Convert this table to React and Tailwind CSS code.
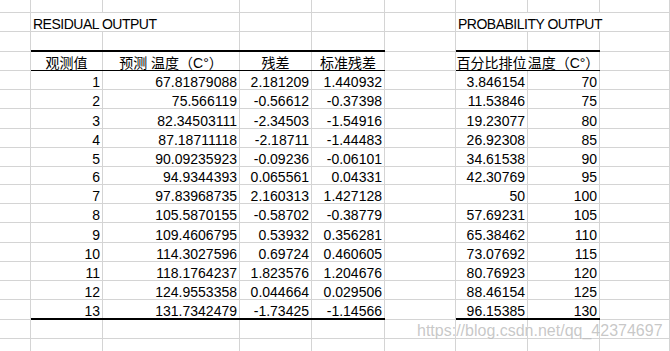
import React from 'react';

// column widths incl. the right grid line
const COLS = ['w-[31px]', 'w-[72px]', 'w-[137px]', 'w-[72px]', 'w-[73px]', 'w-[71px]', 'w-[72px]', 'w-[72px]', 'flex-1'];

const ROW_H = { 13: 'h-[13px]', 18: 'h-[18px]', 19: 'h-[19px]', 20: 'h-[20px]' };

const residuals = [
    ['1', '67.81879088', '2.181209', '1.440932'],
    ['2', '75.566119', '-0.56612', '-0.37398'],
    ['3', '82.34503111', '-2.34503', '-1.54916'],
    ['4', '87.18711118', '-2.18711', '-1.44483'],
    ['5', '90.09235923', '-0.09236', '-0.06101'],
    ['6', '94.9344393', '0.065561', '0.04331'],
    ['7', '97.83968735', '2.160313', '1.427128'],
    ['8', '105.5870155', '-0.58702', '-0.38779'],
    ['9', '109.4606795', '0.53932', '0.356281'],
    ['10', '114.3027596', '0.69724', '0.460605'],
    ['11', '118.1764237', '1.823576', '1.204676'],
    ['12', '124.9553358', '0.044664', '0.029506'],
    ['13', '131.7342479', '-1.73425', '-1.14566'],
];

const probability = [
    ['3.846154', '70'],
    ['11.53846', '75'],
    ['19.23077', '80'],
    ['26.92308', '85'],
    ['34.61538', '90'],
    ['42.30769', '95'],
    ['50', '100'],
    ['57.69231', '105'],
    ['65.38462', '110'],
    ['73.07692', '115'],
    ['80.76923', '120'],
    ['88.46154', '125'],
    ['96.15385', '130'],
];

const dataHeights = [19, 19, 20, 19, 19, 18, 19, 19, 20, 19, 19, 19, 20];

function Cell({ w, align = 'right', bottom = true, line = true, className = '', children }) {
    const justify =
        align === 'right' ? 'justify-end pr-[2px]' : align === 'center' ? 'justify-center' : 'justify-start pl-[2px]';
    return (
        <div
            className={`flex shrink-0 items-end whitespace-nowrap border-[#d4d4d4] leading-none ${line ? 'border-r' : ''} ${bottom ? 'border-b' : ''} ${justify} ${w} ${className}`}
        >
            {children}
        </div>
    );
}

function BlankRow({ h }) {
    return (
        <div className={`flex ${ROW_H[h]}`}>
            {COLS.map((w, i) => (
                <Cell key={i} w={w} />
            ))}
        </div>
    );
}

export default function App() {
    return (
        <div className="relative h-[351px] w-[670px] overflow-hidden bg-white font-['Liberation_Sans','Noto_Sans_CJK_SC',sans-serif] text-[14px] text-black">
            <BlankRow h={13} />

            {/* titles */}
            <div className="flex h-[19px]">
                <Cell w={COLS[0]} />
                <Cell w="w-[209px]" align="left">
                    <span className="tracking-[-0.5px]">RESIDUAL OUTPUT</span>
                </Cell>
                <Cell w={COLS[3]} />
                <Cell w={COLS[4]} />
                <Cell w={COLS[5]} />
                <Cell w="flex-1" align="left">
                    <span className="tracking-[-0.5px]">PROBABILITY OUTPUT</span>
                </Cell>
            </div>

            {/* row above headers, thick rule */}
            <div className="flex h-[20px]">
                <Cell w={COLS[0]} />
                <div className="flex shrink-0 border-b-2 border-black">
                    <Cell w={COLS[1]} bottom={false} />
                    <Cell w={COLS[2]} bottom={false} />
                    <Cell w={COLS[3]} bottom={false} />
                    <Cell w={COLS[4]} bottom={false} />
                </div>
                <Cell w={COLS[5]} />
                <div className="flex shrink-0 border-b-2 border-black">
                    <Cell w={COLS[6]} bottom={false} />
                    <Cell w={COLS[7]} bottom={false} />
                </div>
                <Cell w={COLS[8]} />
            </div>

            {/* headers */}
            <div className="flex h-[19px]">
                <Cell w={COLS[0]} />
                <div className="flex shrink-0 border-b border-black">
                    <Cell w={COLS[1]} align="center" bottom={false}>观测值</Cell>
                    <Cell w={COLS[2]} align="center" bottom={false}>预测 温度（C°）</Cell>
                    <Cell w={COLS[3]} align="center" bottom={false}>残差</Cell>
                    <Cell w={COLS[4]} align="center" bottom={false}>标准残差</Cell>
                </div>
                <Cell w={COLS[5]} />
                <div className="flex shrink-0 border-b border-black">
                    <Cell w="w-[72px] pr-px" align="center" bottom={false} line={false}>百分比排位</Cell>
                    <Cell w={COLS[7]} align="center" bottom={false}>温度（C°）</Cell>
                </div>
                <Cell w={COLS[8]} />
            </div>

            {/* data */}
            {residuals.map((r, i) => {
                const last = i === residuals.length - 1;
                const p = probability[i];
                return (
                    <div key={r[0]} className={`flex ${ROW_H[dataHeights[i]]}`}>
                        <Cell w={COLS[0]} />
                        <div className={`flex shrink-0 ${last ? 'border-b-2 border-black' : ''}`}>
                            <Cell w={COLS[1]} bottom={!last}>{r[0]}</Cell>
                            <Cell w={COLS[2]} bottom={!last}>{r[1]}</Cell>
                            <Cell w={COLS[3]} bottom={!last}>{r[2]}</Cell>
                            <Cell w={COLS[4]} bottom={!last}>{r[3]}</Cell>
                        </div>
                        <Cell w={COLS[5]} />
                        <div className={`flex shrink-0 ${last ? 'border-b-2 border-black' : ''}`}>
                            <Cell w={COLS[6]} bottom={!last}>{p[0]}</Cell>
                            <Cell w={COLS[7]} bottom={!last}>{p[1]}</Cell>
                        </div>
                        <Cell w={COLS[8]} />
                    </div>
                );
            })}

            <BlankRow h={19} />
            <BlankRow h={19} />

            {/* blog watermark */}
            <div className="pointer-events-none absolute left-[417px] top-[323px] text-[16px] leading-none text-[rgba(175,175,175,0.7)] [text-shadow:0_0_2px_rgba(255,255,255,0.9)]">
                https://blog.csdn.net/qq_42374697
            </div>
        </div>
    );
}
